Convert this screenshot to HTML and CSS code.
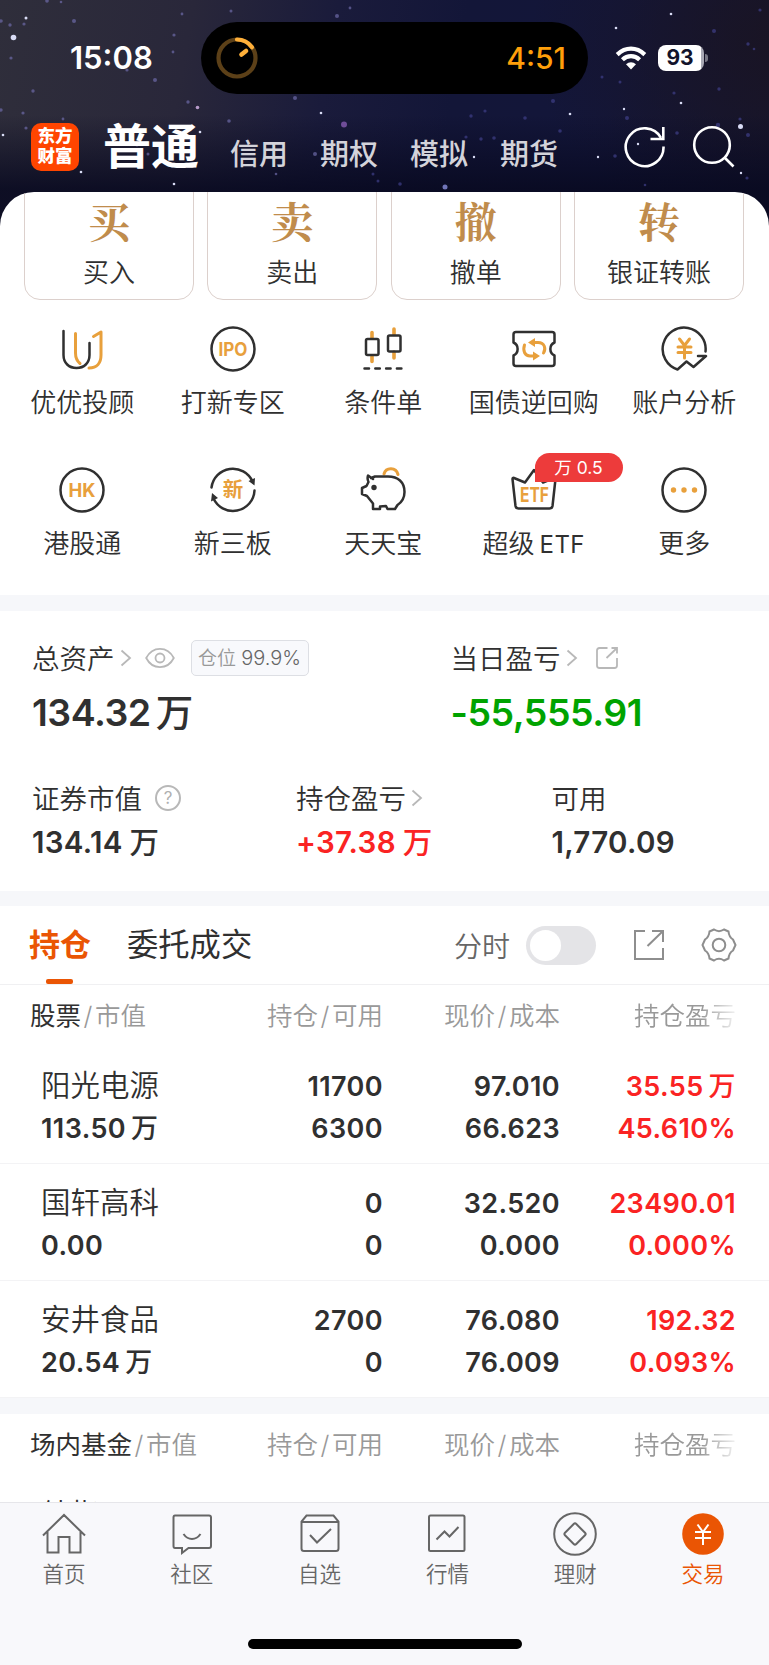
FILE: index.html
```html
<!DOCTYPE html>
<html lang="zh-CN">
<head>
    <meta charset="utf-8" />
    <title>交易</title>
    <link rel="stylesheet" href="styles.css">
</head>
<body>
    <div class="app">
        <header class="header">
            <svg class="stars" viewBox="0 0 769 230" width="769" height="230">
                <g fill="#6d6aa8" opacity="0.700">
                    <circle cx="1" cy="21" r="1.8"/><circle cx="10" cy="25" r="1.7"/><circle cx="24" cy="24" r="1.6"/>
                    <circle cx="74" cy="21" r="2"/><circle cx="47" cy="1" r="1.8"/><circle cx="61" cy="2" r="1.3"/>
                    <circle cx="11" cy="58" r="1.6"/><circle cx="174" cy="35" r="1.6"/><circle cx="173" cy="52" r="1.4"/>
                    <circle cx="182" cy="14" r="1.4"/><circle cx="155" cy="80" r="2"/><circle cx="127" cy="70" r="1.6"/>
                    <circle cx="33" cy="91" r="1.7"/><circle cx="1" cy="110" r="1.7"/><circle cx="23" cy="113" r="1.6"/>
                    <circle cx="26" cy="128" r="1.6"/><circle cx="63" cy="119" r="1.4"/><circle cx="229" cy="121" r="1.8"/>
                    <circle cx="148" cy="154" r="1.5"/><circle cx="137" cy="145" r="1.5"/><circle cx="315" cy="154" r="2"/>
                    <circle cx="276" cy="174" r="1.3"/><circle cx="295" cy="98" r="2"/><circle cx="337" cy="16" r="2"/>
                    <circle cx="350" cy="8" r="1.4"/><circle cx="231" cy="11" r="1.5"/><circle cx="188" cy="102" r="1.7"/>
                </g>
                <g fill="#3f3f88" opacity="0.700">
                    <circle cx="714" cy="31" r="2"/><circle cx="748" cy="44" r="1.7"/><circle cx="760" cy="10" r="1.6"/>
                    <circle cx="754" cy="49" r="1.3"/><circle cx="602" cy="77" r="1.5"/><circle cx="620" cy="82" r="1.5"/>
                    <circle cx="674" cy="93" r="1.6"/><circle cx="719" cy="89" r="1.7"/><circle cx="553" cy="101" r="2"/>
                    <circle cx="627" cy="118" r="2"/><circle cx="525" cy="118" r="1.8"/><circle cx="560" cy="131" r="1.8"/>
                    <circle cx="485" cy="111" r="1.6"/><circle cx="471" cy="116" r="1.7"/><circle cx="466" cy="137" r="1.6"/>
                    <circle cx="481" cy="139" r="1.7"/><circle cx="494" cy="138" r="1.8"/><circle cx="748" cy="135" r="2"/>
                    <circle cx="718" cy="125" r="2.2"/><circle cx="677" cy="133" r="1.8"/><circle cx="615" cy="156" r="1.8"/>
                    <circle cx="400" cy="184" r="1.8"/><circle cx="378" cy="181" r="1.5"/><circle cx="645" cy="185" r="1.3"/>
                    <circle cx="373" cy="174" r="1.5"/><circle cx="747" cy="178" r="1.6"/><circle cx="740" cy="119" r="1.6"/>
                </g>
                <g fill="#d9dcf5">
                    <circle cx="13.5" cy="37.5" r="2.8"/><circle cx="26" cy="18" r="1.5"/><circle cx="3" cy="135" r="1.3"/>
                    <circle cx="81" cy="172" r="1.3"/><circle cx="200" cy="132" r="1.3"/><circle cx="174" cy="184" r="1.3"/>
                    <circle cx="321" cy="113" r="1.3"/><circle cx="671" cy="14" r="1.3"/><circle cx="616" cy="28" r="1.3"/>
                    <circle cx="681" cy="103" r="1.3"/><circle cx="570" cy="114" r="1.3"/><circle cx="624" cy="109" r="1.2"/>
                    <circle cx="598" cy="157" r="1.2"/><circle cx="638" cy="144" r="1.2"/><circle cx="474" cy="157" r="1.2"/>
                    <circle cx="741" cy="173" r="1.2"/><circle cx="740.5" cy="126.5" r="2.5"/>
                </g>
                <circle cx="197.500" cy="107.500" r="1.800" fill="#b79ac9"/>
                <circle cx="344" cy="124.500" r="3" fill="#6f4d98"/>
                <circle cx="445" cy="187" r="2.500" fill="#7074b8"/>
            </svg>

            <div class="status">
                <div class="clock">15:08</div>
                <div class="island">
                    <svg width="42" height="42" viewBox="0 0 42 42" fill="none">
                        <circle cx="21" cy="21" r="18.5" stroke="#5c4018" stroke-width="4.200"/>
                        <path d="M21 2.500A18.500 18.500 0 0 1 36 10.200" stroke="#ffb03a" stroke-width="4.200" stroke-linecap="round"/>
                        <path d="M25.500 17.500L30 14" stroke="#ffb03a" stroke-width="4.600" stroke-linecap="round"/>
                    </svg>
                    <span class="timer">4:51</span>
                </div>
                <svg class="wifi" width="32" height="24" viewBox="0 0 32 24" fill="none" stroke="#fff">
                    <path d="M2.200 8.600Q8.500 2.700 16 2.700T29.800 8.600" stroke-width="4.200"/>
                    <path d="M7.400 13.800Q11.200 10.200 16 10.200T24.600 13.800" stroke-width="4.200"/>
                    <path d="M16 23.500L11 18.300Q13.300 16.300 16 16.300T21 18.300Z" fill="#fff" stroke="none"/>
                </svg>
                <div class="battery"><span>93</span></div>
            </div>

            <nav class="nav">
                <div class="logo"><span>东方</span><span>财富</span></div>
                <span class="nav-current">普通</span>
                <span class="nav-item">信用</span>
                <span class="nav-item">期权</span>
                <span class="nav-item">模拟</span>
                <span class="nav-item">期货</span>
                <svg class="refresh" width="44" height="44" viewBox="0 0 44 44" fill="none" stroke="#fff" stroke-width="2.600">
                    <path d="M40.500 21.500A18.900 18.900 0 1 1 38 12.800"/>
                    <path d="M40.300 2V14H27.500"/>
                </svg>
                <svg class="search" width="44" height="44" viewBox="0 0 44 44" fill="none" stroke="#fff" stroke-width="2.600">
                    <circle cx="20" cy="20" r="17.800"/>
                    <path d="M32.500 32.500L41.500 41.500"/>
                </svg>
            </nav>
        </header>

        <main class="panel">
            <div class="cards">
                <div class="card"><b>买</b><span>买入</span></div>
                <div class="card"><b>卖</b><span>卖出</span></div>
                <div class="card"><b>撤</b><span>撤单</span></div>
                <div class="card"><b>转</b><span>银证转账</span></div>
            </div>

            <div class="menu">
                <div class="menu-item">
                    <svg class="icon" viewBox="0 0 48 48">
                        <path class="dark" d="M5.500 6V30C5.500 38 11 43 18.500 43S31.500 38 31.500 30V18"/>
                        <path class="gold" d="M17.500 8.500V28C17.500 33 19 36 22 38.500M35.500 11.500L43 7V30C43 38 39 43 31 43"/>
                    </svg>
                    <span>优优投顾</span>
                </div>
                <div class="menu-item">
                    <svg class="icon" viewBox="0 0 48 48">
                        <circle class="dark" cx="24" cy="24" r="21.500"/>
                        <text class="icon-text" x="24" y="31" textLength="29" lengthAdjust="spacingAndGlyphs" font-size="19">IPO</text>
                    </svg>
                    <span>打新专区</span>
                </div>
                <div class="menu-item">
                    <svg class="icon" viewBox="0 0 48 48">
                        <path class="gold candle" d="M13 7.500V13M13 31.500V36.500M35 4V9.500M35 27V33"/>
                        <rect class="dark" x="7" y="14" width="12.500" height="16" rx="1.500"/>
                        <rect class="dark" x="29" y="10.500" width="12.500" height="16" rx="1.500"/>
                        <path class="dark" stroke-dasharray="4.500 6.300" d="M5.500 43.500H43.500"/>
                    </svg>
                    <span>条件单</span>
                </div>
                <div class="menu-item">
                    <svg class="icon" viewBox="0 0 48 48">
                        <path class="dark" d="M6 7H42Q44.500 7 44.500 9.500V17.500C39 20 39 28 44.500 30.500V38.500Q44.500 41 42 41H6Q3.500 41 3.500 38.500V30.500C9 28 9 20 3.500 17.500V9.500Q3.500 7 6 7Z"/>
                        <path class="gold" d="M24 17.500H28C35 17.500 36 24 33.500 28M14.500 20C12.500 26 15 31 20 31H24"/>
                        <path class="gold-fill" d="M18 17.500L25 13V22ZM30 31L23 26.500V35.500Z"/>
                    </svg>
                    <span>国债逆回购</span>
                </div>
                <div class="menu-item">
                    <svg class="icon" viewBox="0 0 48 48">
                        <path class="dark" d="M45.500 26.500A21.500 21.500 0 1 0 17.500 44.500L26.500 36.500L33.500 42L46 31H38"/>
                        <path class="gold" d="M19.500 14L24.500 20.500L29.500 14M18 22H31M18 27.500H31M24.500 21V33"/>
                    </svg>
                    <span>账户分析</span>
                </div>
                <div class="menu-item">
                    <svg class="icon" viewBox="0 0 48 48">
                        <circle class="dark" cx="24" cy="24" r="21.500"/>
                        <text class="icon-text" x="24" y="31" textLength="27" lengthAdjust="spacingAndGlyphs" font-size="19">HK</text>
                    </svg>
                    <span>港股通</span>
                </div>
                <div class="menu-item">
                    <svg class="icon" viewBox="0 0 48 48">
                        <path class="dark" d="M2.500 21.500A21.500 21.500 0 0 1 43.500 15.500M45.500 24.500A21.500 21.500 0 0 1 4.500 32.500"/>
                        <path class="dark-fill" d="M39.500 15L46 12L45.500 19.500ZM2 35.500L3 27L9 32Z"/>
                        <text class="icon-text" x="24" y="31.300" font-size="20.500">新</text>
                    </svg>
                    <span>新三板</span>
                </div>
                <div class="menu-item">
                    <svg class="icon" viewBox="0 0 48 48">
                        <path class="gold" d="M25 8C27 1 37 1 39 8.500"/>
                        <path class="dark" d="M14 13L9 9.500Q8 13 9.500 16L7.500 20L3 22V28L8 30L14 37.500V43H21V40.500L27 40L28.500 43H36L38.500 39C43 36 45.500 32 45.500 26C45.500 16 39 10.500 29 10.500H16L12 12"/>
                        <circle class="dark-fill" cx="15" cy="21.500" r="2.700"/>
                    </svg>
                    <span>天天宝</span>
                </div>
                <div class="menu-item">
                    <svg class="icon" viewBox="0 0 48 48">
                        <path class="dark" d="M5.500 40L2.500 13Q2.500 11.500 4 12L15 16.500L24 4L33 16.500L44 12Q46 11.500 45.500 13L42.500 40Q42 42.500 39.500 42.500H8.500Q6 42.500 5.500 40Z"/>
                        <text class="icon-text" x="24.500" y="35.500" textLength="29" lengthAdjust="spacingAndGlyphs" font-size="20">ETF</text>
                    </svg>
                    <em class="badge">万 0.5</em>
                    <span>超级<small>ETF</small></span>
                </div>
                <div class="menu-item">
                    <svg class="icon" viewBox="0 0 48 48">
                        <circle class="dark" cx="24" cy="24" r="21.500"/>
                        <g class="gold-fill"><circle cx="13.500" cy="24" r="2.700"/><circle cx="24" cy="24" r="2.700"/><circle cx="34.500" cy="24" r="2.700"/></g>
                    </svg>
                    <span>更多</span>
                </div>
            </div>

            <section class="assets">
                <div class="assets-main">
                    <div class="total">
                        <div class="label">
                            总资产
                            <svg class="chevron" width="12" height="18" viewBox="0 0 12 18"><path d="M1.500 1.500L10 9L1.500 16.500"/></svg>
                            <svg class="eye" width="30" height="22" viewBox="0 0 30 22"><path d="M1.200 11C7.500-1.200 22.500-1.200 28.800 11C22.500 23.200 7.500 23.200 1.200 11Z"/><circle cx="15" cy="11" r="4.500"/></svg>
                            <span class="ratio">仓位 <i>99.9%</i></span>
                        </div>
                        <div class="big">134.32<span class="wan">万</span></div>
                    </div>
                    <div class="today">
                        <div class="label">
                            当日盈亏
                            <svg class="chevron" width="12" height="18" viewBox="0 0 12 18"><path d="M1.500 1.500L10 9L1.500 16.500"/></svg>
                            <svg class="share-small" width="24" height="24" viewBox="0 0 24 24"><path d="M12.500 2H4.500Q2 2 2 4.500V19.500Q2 22 4.500 22H19.500Q22 22 22 19.500V12M16.500 2H22V7.500M22 2L11.500 12"/></svg>
                        </div>
                        <div class="big green">-55,555.91</div>
                    </div>
                </div>
                <div class="assets-sub">
                    <div>
                        <div class="label">
                            证券市值
                            <span class="help">?</span>
                        </div>
                        <div class="mid">134.14<span class="wan">万</span></div>
                    </div>
                    <div>
                        <div class="label">
                            持仓盈亏
                            <svg class="chevron" width="12" height="18" viewBox="0 0 12 18"><path d="M1.500 1.500L10 9L1.500 16.500"/></svg>
                        </div>
                        <div class="mid red">+37.38<span class="wan">万</span></div>
                    </div>
                    <div>
                        <div class="label">可用</div>
                        <div class="mid">1,770.09</div>
                    </div>
                </div>
            </section>

            <section class="holding">
                <div class="tabs">
                    <span class="tab active">持仓</span>
                    <span class="tab">委托成交</span>
                    <span class="minute">分时</span>
                    <span class="switch"></span>
                    <svg class="share" width="32" height="32" viewBox="0 0 32 32"><path d="M12 2H2V30H30V19M19 2H30V13M30 2L14.500 17"/></svg>
                    <svg class="gear" width="38" height="38" viewBox="0 0 38 38">
                        <path d="M14 3.500Q19 6.800 24 3.500L28.500 5.500Q29 11 33 13.500L35.500 19L33 24.500Q29 27 28.500 32.500L24 34.500Q19 31.200 14 34.500L9.500 32.500Q9 27 5 24.500L2.500 19L5 13.500Q9 11 9.500 5.500Z"/>
                        <circle cx="19" cy="19" r="6.300"/>
                    </svg>
                </div>

                <div class="row head">
                    <div><strong>股票</strong><s>/</s>市值</div>
                    <div>持仓<s>/</s>可用</div>
                    <div>现价<s>/</s>成本</div>
                    <div class="fade">持仓盈亏</div>
                </div>
                <div class="row stock">
                    <div><span class="name">阳光电源</span><span>113.50<span class="wan">万</span></span></div>
                    <div><span>11700</span><span>6300</span></div>
                    <div><span>97.010</span><span>66.623</span></div>
                    <div class="red"><span>35.55<span class="wan">万</span></span><span>45.610%</span></div>
                </div>
                <div class="row stock">
                    <div><span class="name">国轩高科</span><span>0.00</span></div>
                    <div><span>0</span><span>0</span></div>
                    <div><span>32.520</span><span>0.000</span></div>
                    <div class="red"><span>23490.01</span><span>0.000%</span></div>
                </div>
                <div class="row stock">
                    <div><span class="name">安井食品</span><span>20.54<span class="wan">万</span></span></div>
                    <div><span>2700</span><span>0</span></div>
                    <div><span>76.080</span><span>76.009</span></div>
                    <div class="red"><span>192.32</span><span>0.093%</span></div>
                </div>
            </section>

            <section class="fund">
                <div class="row head">
                    <div><strong>场内基金</strong><s>/</s>市值</div>
                    <div>持仓<s>/</s>可用</div>
                    <div>现价<s>/</s>成本</div>
                    <div class="fade">持仓盈亏</div>
                </div>
                <div class="row stock">
                    <div><span class="name">纳指</span></div>
                </div>
            </section>
        </main>

        <footer class="footer">
            <div class="tabbar">
                <div class="tabbar-item">
                    <svg viewBox="0 0 44 44"><path d="M1 23.500L22 3L43 23.500M5.500 20V40.500H16.500V25H27.500V40.500H38.500V20"/></svg>
                    <span>首页</span>
                </div>
                <div class="tabbar-item">
                    <svg viewBox="0 0 44 44"><path d="M5 3.500H39Q41 3.500 41 5.500V34Q41 36 39 36H18.500L12 41V36H5Q3.500 36 3.500 34V5.500Q3.500 3.500 5 3.500Z"/><path d="M13.500 22Q17 27 22 27T30.500 22"/></svg>
                    <span>社区</span>
                </div>
                <div class="tabbar-item">
                    <svg viewBox="0 0 44 44"><path d="M8.500 3.500H35.500L40.500 9.500V36.500Q40.500 39 38 39H6Q3.500 39 3.500 36.500V9.500ZM3.500 10H40.500M12 23L19 30.500L33 17"/></svg>
                    <span>自选</span>
                </div>
                <div class="tabbar-item">
                    <svg viewBox="0 0 44 44"><rect x="4" y="3.500" width="35.500" height="35.500" rx="1.500"/><path d="M11.500 27.500L19.500 19.500L24.500 24.500L33.500 15"/></svg>
                    <span>行情</span>
                </div>
                <div class="tabbar-item">
                    <svg viewBox="0 0 44 44"><circle cx="22" cy="22" r="20.800"/><path d="M20.700 12Q22 10.700 23.300 12L32 20.700Q33.300 22 32 23.300L23.300 32Q22 33.300 20.700 32L12 23.300Q10.700 22 12 20.700Z"/></svg>
                    <span>理财</span>
                </div>
                <div class="tabbar-item on">
                    <svg viewBox="0 0 44 44"><circle class="coin" cx="22" cy="22" r="20.800"/><path class="yen" d="M16.500 12.500L22 20L27.500 12.500M14 20H30M14 26H30M22 20V33"/></svg>
                    <span>交易</span>
                </div>
            </div>
            <div class="home-bar"></div>
        </footer>
    </div>
</body>
</html>
```

FILE: styles.css
```css
* {
    padding: 0;
    margin: 0;
    box-sizing: border-box;
}

body {
    font-family: Inter, "Noto Sans CJK SC", sans-serif;
    color: #303030;
    background: #fff;
}

svg {
    display: block;
    flex: none;
    fill: none;
}

.app {
    width: 769px;
    height: 1665px;
    overflow: hidden;
    display: flex;
    flex-direction: column;
    background: #0a0d26;
}

/* header */
.header {
    position: relative;
    height: 192px;
    flex: none;
    color: #fff;
}

.stars {
    position: absolute;
    left: 0;
    top: 0;
    background:
        linear-gradient(180deg, rgba(8, 8, 28, 0) 50%, rgba(8, 9, 32, 0.850) 82%),
        radial-gradient(ellipse 260px 200px at 790px 40px, rgba(26, 20, 34, 0.900), rgba(26, 20, 34, 0)),
        linear-gradient(100deg, #2f2e3b 0%, #29273a 24%, #1a1b3b 42%, #131638 58%, #13163a 78%, #161630 100%);
}

.status {
    position: relative;
    height: 116px;
    display: flex;
    align-items: center;
}

.clock {
    width: 201px;
    padding: 0 0 2px 70px;
    font-size: 31px;
    font-weight: 600;
}

.island {
    width: 387px;
    height: 72px;
    padding: 0 22px 0 15px;
    border-radius: 36px;
    background: #000;
    display: flex;
    align-items: center;
    justify-content: space-between;
}

.timer {
    color: #ff9f0a;
    font-size: 30px;
    font-weight: 500;
}

.wifi {
    margin-left: 27px;
}

.battery {
    position: relative;
    width: 46px;
    height: 26px;
    margin-left: 11px;
    padding-right: 2px;
    border-radius: 8px;
    background: linear-gradient(90deg, #fff 43px, #a8a8b4 43px);
    color: #12132b;
    font-size: 21px;
    font-weight: 700;
    line-height: 26px;
    text-align: center;
}

.battery::after {
    content: "";
    position: absolute;
    right: -4px;
    top: 9px;
    width: 3px;
    height: 8px;
    border-radius: 0 3px 3px 0;
    background: #777785;
}

.nav {
    position: relative;
    height: 75px;
    padding-left: 31px;
    display: flex;
}

.logo {
    width: 48px;
    height: 48px;
    margin: 7px 24px 0 0;
    padding-top: 3px;
    border-radius: 10px;
    background: #ff4500;
    display: flex;
    flex-direction: column;
    align-items: center;
    font-size: 17.500px;
    font-weight: 900;
    line-height: 20px;
}

.nav-current {
    width: 127px;
    font-size: 48px;
    font-weight: 700;
    line-height: 61px;
}

.nav-item {
    width: 90px;
    padding-top: 19px;
    font-size: 29px;
    font-weight: 500;
    line-height: 40px;
    color: #d3d3da;
}

.refresh {
    margin: 9px 0 0 33px;
}

.search {
    margin: 9px 0 0 25px;
}

/* white panel */
.panel {
    position: relative;
    flex: 1;
    min-height: 0;
    overflow: hidden;
    border-radius: 34px 34px 0 0;
    background: #fff;
}

.cards {
    margin-top: -15px;
    padding: 0 25px 0 24px;
    display: grid;
    grid-template-columns: repeat(4, 1fr);
    gap: 13.500px;
}

.card {
    height: 123px;
    padding-top: 16px;
    border: 1.500px solid #dcd0cc;
    border-radius: 16px;
    display: flex;
    flex-direction: column;
    align-items: center;
    font-size: 26px;
}

.card b {
    height: 52px;
    margin-bottom: 5px;
    line-height: 52px;
    font-family: "Noto Serif CJK SC", "Noto Sans CJK SC", serif;
    font-size: 42px;
    color: #c08c4c;
}

.card span {
    font-weight: 350;
    line-height: 44px;
}

.menu {
    height: 295px;
    padding: 25px 9px 0 7px;
    display: grid;
    grid-template-columns: repeat(5, 150.500px);
    grid-auto-rows: 140.500px;
}

.menu-item {
    position: relative;
    display: flex;
    flex-direction: column;
    align-items: center;
}

.menu-item span {
    margin-top: 10px;
    font-size: 26px;
    font-weight: 350;
    line-height: 40px;
    white-space: nowrap;
}

.menu-item small {
    margin-left: 5px;
    font-size: 24px;
    font-weight: 400;
    letter-spacing: 0.500px;
}

.icon {
    width: 48px;
    height: 48px;
}

.dark,
.gold {
    stroke: #303030;
    stroke-width: 2.500;
    stroke-linecap: round;
    stroke-linejoin: round;
}

.gold {
    stroke: #e8a03c;
    stroke-width: 3;
}

.candle {
    stroke-width: 3.600;
}

.dark-fill {
    fill: #303030;
}

.gold-fill,
.icon-text {
    fill: #e8a03c;
}

.icon-text {
    font-weight: 700;
    text-anchor: middle;
}

.badge {
    position: absolute;
    left: 76px;
    top: -13px;
    width: 88px;
    height: 29px;
    border-radius: 15px 15px 15px 0;
    background: #ed3b3b;
    color: #fff;
    font-size: 17.500px;
    font-style: normal;
    line-height: 29px;
    text-align: center;
}

/* assets */
.assets {
    height: 311px;
    border-top: 16px solid #f6f7fa;
    border-bottom: 15px solid #f6f7fa;
    padding: 25px 32px 0;
}

.assets-main {
    height: 140px;
    display: grid;
    grid-template-columns: 418.500px 1fr;
}

.assets-sub {
    display: grid;
    grid-template-columns: 264px 255.500px 1fr;
}

.label {
    height: 42px;
    display: flex;
    align-items: center;
    font-size: 27.500px;
    font-weight: 350;
}

.label svg,
.label span {
    margin-top: 2px;
}

.chevron,
.eye,
.share-small {
    stroke: #b8b8b8;
    stroke-width: 1.800;
}

.chevron {
    margin-left: 5px;
}

.eye {
    margin-left: 13px;
}

.share-small {
    margin-left: 17px;
}

.ratio {
    width: 118px;
    height: 36px;
    margin-left: 16px;
    border: 1px solid #dddfe4;
    border-radius: 5px;
    background: #f8f9fc;
    color: #999;
    font-size: 19px;
    line-height: 34px;
    text-align: center;
    white-space: nowrap;
}

.ratio i {
    color: #666;
    font-size: 20px;
    font-style: normal;
}

.help {
    width: 26px;
    height: 26px;
    margin-left: 13px;
    border: 2px solid #b8b8b8;
    border-radius: 50%;
    color: #b0b0b0;
    font-size: 17px;
    font-weight: 400;
    line-height: 22px;
    text-align: center;
}

.big {
    font-size: 37.500px;
    font-weight: 600;
    line-height: 69px;
    letter-spacing: -0.500px;
}

.mid {
    font-size: 29.500px;
    font-weight: 600;
    line-height: 48px;
    letter-spacing: 0.300px;
}

.wan {
    margin-left: 5px;
    font-weight: 500;
}

.mid .wan {
    margin-left: 7px;
}

.green {
    color: #00a300;
}

.red {
    color: #fa2323;
}

/* holdings */
.tabs {
    height: 79px;
    padding-left: 29px;
    border-bottom: 1px solid #f0f0f2;
    display: flex;
    align-items: center;
    font-size: 31.300px;
}

.tab {
    position: relative;
    width: 98px;
    line-height: 78px;
    white-space: nowrap;
}

.tab.active {
    color: #ea5504;
    font-size: 31px;
    font-weight: 700;
}

.tab.active::after {
    content: "";
    position: absolute;
    left: 17px;
    bottom: 0;
    width: 27px;
    height: 5px;
    border-radius: 2px;
    background: #ea5504;
}

.minute {
    margin-left: 229px;
    color: #666;
    font-size: 28px;
    font-weight: 350;
}

.switch {
    width: 70px;
    height: 39px;
    margin-left: 16px;
    padding: 4px;
    border-radius: 20px;
    background: #e4e4e7;
}

.switch::after {
    content: "";
    display: block;
    width: 31px;
    height: 31px;
    border-radius: 50%;
    background: #fff;
}

.share,
.gear {
    stroke: #8e8e8e;
    stroke-width: 2;
}

.share {
    margin-left: 37px;
}

.gear {
    margin-left: 35px;
}

.row {
    display: grid;
    grid-template-columns: 206.500px 176.500px 177px 176px;
    text-align: right;
}

.row > div:first-child {
    text-align: left;
}

.head {
    height: 62px;
    color: #999;
    font-size: 25.500px;
    font-weight: 350;
    line-height: 62px;
}

.head > div:first-child {
    padding-left: 30px;
    white-space: nowrap;
}

.head strong {
    color: #303030;
    font-weight: 400;
}

.head s {
    margin: 0 2.500px;
    text-decoration: none;
}

.fade {
    -webkit-mask-image: linear-gradient(90deg, #000 80%, transparent 103%);
    mask-image: linear-gradient(90deg, #000 80%, transparent 103%);
}

.stock {
    height: 117px;
    padding-top: 19px;
    border-bottom: 1px solid #f3f3f5;
    font-size: 27px;
    font-weight: 600;
    line-height: 42px;
    letter-spacing: 0.400px;
}

.stock > div {
    display: flex;
    flex-direction: column;
}

.stock > div:first-child {
    padding-left: 41px;
}

.stock .name {
    margin-bottom: 3px;
    font-size: 29.500px;
    font-weight: 350;
    line-height: 39px;
    letter-spacing: 0;
}

.fund {
    border-top: 16px solid #f6f7fa;
}

/* bottom bar */
.footer {
    height: 163px;
    flex: none;
    border-top: 1px solid #e6e6ea;
    background: #f8f8fb;
}

.tabbar {
    width: 767px;
    height: 136px;
    display: grid;
    grid-template-columns: repeat(6, 1fr);
}

.tabbar-item {
    padding-top: 9px;
    display: flex;
    flex-direction: column;
    align-items: center;
    color: #666;
    font-size: 21.500px;
    font-weight: 350;
    line-height: 36px;
}

.tabbar-item svg {
    width: 44px;
    height: 44px;
    stroke: #666;
    stroke-width: 2;
}

.tabbar-item.on {
    color: #ea5504;
}

.tabbar-item .coin {
    fill: #ea5504;
    stroke: none;
}

.tabbar-item .yen {
    stroke: #fff;
    stroke-width: 2;
}

.home-bar {
    width: 274px;
    height: 10px;
    margin: 0 auto;
    border-radius: 5px;
    background: #000;
}
```
